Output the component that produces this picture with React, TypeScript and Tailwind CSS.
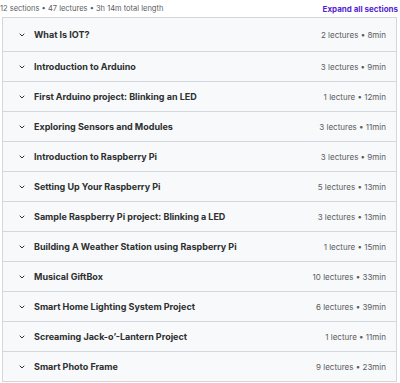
import React from 'react';

type Section = {
  title: string;
  lectures: number;
  length: string;
};

const sections: Section[] = [
  { title: 'What Is IOT?', lectures: 2, length: '8min' },
  { title: 'Introduction to Arduino', lectures: 3, length: '9min' },
  { title: 'First Arduino project: Blinking an LED', lectures: 1, length: '12min' },
  { title: 'Exploring Sensors and Modules', lectures: 3, length: '11min' },
  { title: 'Introduction to Raspberry Pi', lectures: 3, length: '9min' },
  { title: 'Setting Up Your Raspberry Pi', lectures: 5, length: '13min' },
  { title: 'Sample Raspberry Pi project: Blinking a LED', lectures: 3, length: '13min' },
  { title: 'Building A Weather Station using Raspberry Pi', lectures: 1, length: '15min' },
  { title: 'Musical GiftBox', lectures: 10, length: '33min' },
  { title: 'Smart Home Lighting System Project', lectures: 6, length: '39min' },
  { title: 'Screaming Jack-o\u2019-Lantern Project', lectures: 1, length: '11min' },
  { title: 'Smart Photo Frame', lectures: 9, length: '23min' },
];

const Chevron = () => (
  <svg width="8" height="8" viewBox="0 0 24 24" fill="none" stroke="#2d2f31" strokeWidth="3" strokeLinecap="round" strokeLinejoin="round">
    <path d="M6 9l6 6 6-6" />
  </svg>
);

export default function App() {
  return (
    <div className="w-[400px] h-[383px] bg-white overflow-hidden font-['Inter','Liberation_Sans',sans-serif] text-[#2d2f31]">
      <div className="flex items-center justify-between h-[17px] pr-[2px]">
        <span className="text-[7.5px] text-[#595c5f]">12 sections • 47 lectures • 3h 14m total length</span>
        <span className="text-[8px] font-bold text-[#5624d0]">Expand all sections</span>
      </div>
      <div className="ml-[2px] w-[395px] border border-[#d1d7dc]">
        {sections.map((s, i) => (
          <div
            key={s.title}
            className={`flex items-center justify-between bg-[#f7f9fa] pl-[15px] pr-[10px] ${
              i === 0 ? 'h-[33px]' : 'h-[30px] border-t border-[#d1d7dc]'
            }`}
          >
            <div className="flex items-center gap-[8px]">
              <Chevron />
              <span className="text-[9px] font-bold">{s.title}</span>
            </div>
            <span className="text-[8px] text-[#595c5f]">
              {s.lectures} {s.lectures === 1 ? 'lecture' : 'lectures'} • {s.length}
            </span>
          </div>
        ))}
      </div>
    </div>
  );
}
